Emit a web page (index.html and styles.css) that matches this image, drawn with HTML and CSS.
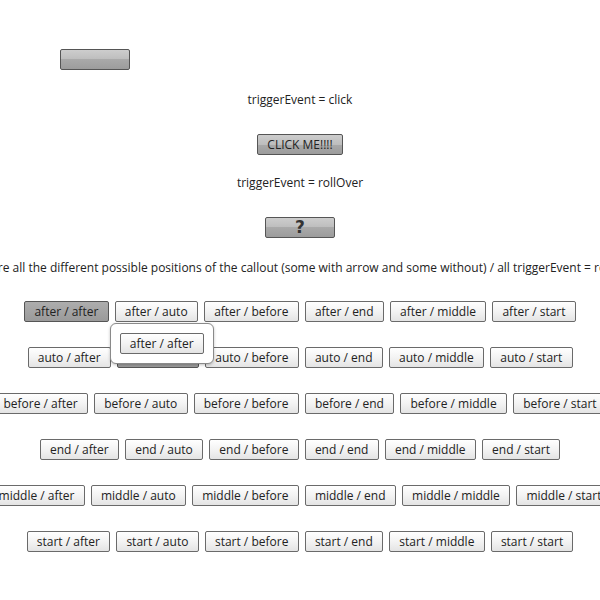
FILE: index.html
```html
<!DOCTYPE html>
<html>
<head>
<meta charset="utf-8">
<link rel="stylesheet" href="styles.css">
</head>
<body>
<div class="page">
  <div class="top-row"><button class="gbtn wide70"></button></div>
  <div class="label">triggerEvent = click</div>
  <div class="center"><button class="gbtn click">CLICK ME!!!!</button></div>
  <div class="label label2">triggerEvent = rollOver</div>
  <div class="center"><button class="gbtn wide70 q">?</button></div>
  <div class="long">Here are all the different possible positions of the callout (some with arrow and some without) / all triggerEvent = rollOver</div>

  <div class="row">
    <div class="anchor">
      <button class="btn down">after / after</button>
      <div class="callout"><button class="btn">after / after</button></div>
    </div>
    <button class="btn">after / auto</button>
    <button class="btn">after / before</button>
    <button class="btn">after / end</button>
    <button class="btn">after / middle</button>
    <button class="btn">after / start</button>
  </div>
  <div class="row">
    <button class="btn">auto / after</button>
    <button class="btn down">auto / auto</button>
    <button class="btn">auto / before</button>
    <button class="btn">auto / end</button>
    <button class="btn">auto / middle</button>
    <button class="btn">auto / start</button>
  </div>
  <div class="row">
    <button class="btn">before / after</button>
    <button class="btn">before / auto</button>
    <button class="btn">before / before</button>
    <button class="btn">before / end</button>
    <button class="btn">before / middle</button>
    <button class="btn">before / start</button>
  </div>
  <div class="row">
    <button class="btn">end / after</button>
    <button class="btn">end / auto</button>
    <button class="btn">end / before</button>
    <button class="btn">end / end</button>
    <button class="btn">end / middle</button>
    <button class="btn">end / start</button>
  </div>
  <div class="row">
    <button class="btn">middle / after</button>
    <button class="btn">middle / auto</button>
    <button class="btn">middle / before</button>
    <button class="btn">middle / end</button>
    <button class="btn">middle / middle</button>
    <button class="btn">middle / start</button>
  </div>
  <div class="row">
    <button class="btn">start / after</button>
    <button class="btn">start / auto</button>
    <button class="btn">start / before</button>
    <button class="btn">start / end</button>
    <button class="btn">start / middle</button>
    <button class="btn">start / start</button>
  </div>
</div>
</body>
</html>
```
FILE: styles.css
```css
html, body {
  margin: 0;
  padding: 0;
  background: #ffffff;
}
body {
  width: 600px;
  height: 600px;
  overflow: hidden;
  font-family: "Open Sans", "DejaVu Sans", sans-serif;
  font-size: 12px;
  color: #222;
}
.page {
  display: flex;
  flex-direction: column;
}
.top-row {
  margin-top: 49px;
  padding-left: 60px;
  display: flex;
}
.center {
  display: flex;
  justify-content: center;
}
.label {
  margin-top: 22px;
  line-height: 16px;
  height: 16px;
  text-align: center;
  color: #222;
}
.label2 {
  margin-top: 20px;
}
.gbtn {
  box-sizing: border-box;
  height: 21px;
  border: 1px solid #555;
  border-radius: 2px;
  background: linear-gradient(#cdcdcd 0%, #bdbdbd 50%, #a9a9a9 50%, #9c9c9c 100%);
  font-family: "Open Sans", "DejaVu Sans", sans-serif;
  font-size: 12px;
  color: #222;
  padding: 0;
  line-height: 19px;
}
.wide70 { width: 70px; }
.click {
  margin-top: 26px;
  width: 86px;
}
.q {
  margin-top: 26px;
  height: 21px;
  font-weight: bold;
  font-size: 17px;
  color: #333;
  line-height: 19px;
  font-family: "DejaVu Sans", sans-serif;
}
.long {
  margin-top: 22px;
  height: 16px;
  line-height: 16px;
  display: flex;
  justify-content: center;
  white-space: nowrap;
  color: #222;
}
.row {
  margin-top: 25px;
  display: flex;
  justify-content: center;
  gap: 6px;
  white-space: nowrap;
}
.btn {
  flex-shrink: 0;
  box-sizing: border-box;
  height: 21px;
  padding: 0 9.25px;
  border: 1px solid #6a6a6a;
  border-radius: 2px;
  background: linear-gradient(#ffffff 0%, #f3f3f3 50%, #e4e4e4 100%);
  font-family: "Open Sans", "DejaVu Sans", sans-serif;
  font-size: 12px;
  line-height: 19px;
  color: #222;
}
.btn.down {
  background: linear-gradient(#adadad 0%, #9a9a9a 100%);
  border-color: #555;
}
.anchor {
  position: relative;
  display: flex;
  flex-shrink: 0;
}
.callout {
  position: absolute;
  top: 22px;
  left: calc(100% + 1px);
  z-index: 5;
  box-sizing: border-box;
  padding: 9px;
  background: #fff;
  border: 1px solid #8a8a8a;
  border-radius: 6px;
  box-shadow: 0 1px 3px rgba(0,0,0,0.25);
  display: flex;
  justify-content: center;
}
```
